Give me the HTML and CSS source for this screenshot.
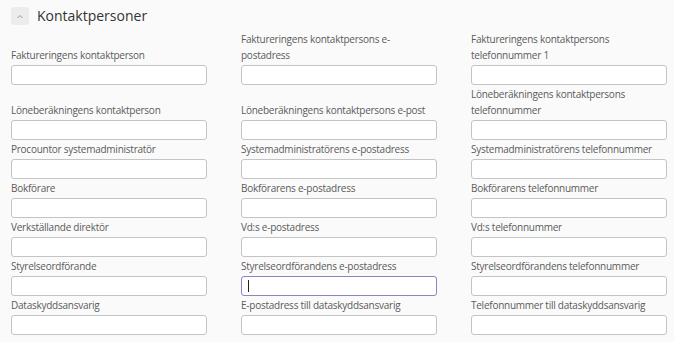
FILE: index.html
```html
<!DOCTYPE html>
<html lang="sv">
<head>
  <meta charset="UTF-8" />
  <title>Kontaktpersoner</title>
  <link rel="stylesheet" href="styles.css">
</head>
<body>

  <section class="panel">
    <header class="panel-head">
      <button class="toggle" aria-label="Fäll ihop">
        <svg width="8" height="5" viewBox="0 0 8 5"><path d="M1.5 4 L4 1.5 L6.5 4" fill="none" stroke="#999" stroke-width="1"/></svg>
      </button>
      <h2>Kontaktpersoner</h2>
    </header>

    <div class="fields">
      <div class="field"><label>Faktureringens kontaktperson</label><input type="text"></div>
      <div class="field"><label>Faktureringens kontaktpersons e-postadress</label><input type="text"></div>
      <div class="field"><label>Faktureringens kontaktpersons telefonnummer 1</label><input type="text"></div>

      <div class="field"><label>Löneberäkningens kontaktperson</label><input type="text"></div>
      <div class="field"><label>Löneberäkningens kontaktpersons e-post</label><input type="text"></div>
      <div class="field"><label>Löneberäkningens kontaktpersons telefonnummer</label><input type="text"></div>

      <div class="field"><label>Procountor systemadministratör</label><input type="text"></div>
      <div class="field"><label>Systemadministratörens e-postadress</label><input type="text"></div>
      <div class="field"><label>Systemadministratörens telefonnummer</label><input type="text"></div>

      <div class="field"><label>Bokförare</label><input type="text"></div>
      <div class="field"><label>Bokförarens e-postadress</label><input type="text"></div>
      <div class="field"><label>Bokförarens telefonnummer</label><input type="text"></div>

      <div class="field"><label>Verkställande direktör</label><input type="text"></div>
      <div class="field"><label>Vd:s e-postadress</label><input type="text"></div>
      <div class="field"><label>Vd:s telefonnummer</label><input type="text"></div>

      <div class="field"><label>Styrelseordförande</label><input type="text"></div>
      <div class="field"><label>Styrelseordförandens e-postadress</label>
        <div class="input-wrap"><input type="text" class="focused"><span class="caret"></span></div>
      </div>
      <div class="field"><label>Styrelseordförandens telefonnummer</label><input type="text"></div>

      <div class="field"><label>Dataskyddsansvarig</label><input type="text"></div>
      <div class="field"><label>E-postadress till dataskyddsansvarig</label><input type="text"></div>
      <div class="field"><label>Telefonnummer till dataskyddsansvarig</label><input type="text"></div>
    </div>
  </section>

</body>
</html>
```

FILE: styles.css
```css
*{margin:0;padding:0;box-sizing:border-box}
body{font-family:"Open Sans","Noto Sans",sans-serif;background:#fafafa;color:#333}
.panel{padding:7px 0 0 11px}
.panel-head{display:flex;align-items:center;gap:8px;margin-bottom:6px}
.toggle{width:18px;height:18px;border:none;border-radius:3px;background:#ececec;display:flex;align-items:center;justify-content:center}
.panel-head h2{font-size:14px;font-weight:500;color:#333;line-height:18px}
.fields{display:grid;grid-template-columns:repeat(3,196px);column-gap:34px;row-gap:1px;align-items:end}
.field{display:flex;flex-direction:column}
.field label{font-size:10px;line-height:16px;letter-spacing:-0.25px;color:#5a5a5a;margin-bottom:2px}
.field input{display:block;width:196px;height:20px;border:1px solid #c4c4c4;border-radius:3px;background:#fff;outline:none}
.input-wrap{position:relative}
.field input.focused{border-color:#8c84c4}
.caret{position:absolute;left:7px;top:4px;width:1px;height:12px;background:#222}
```
